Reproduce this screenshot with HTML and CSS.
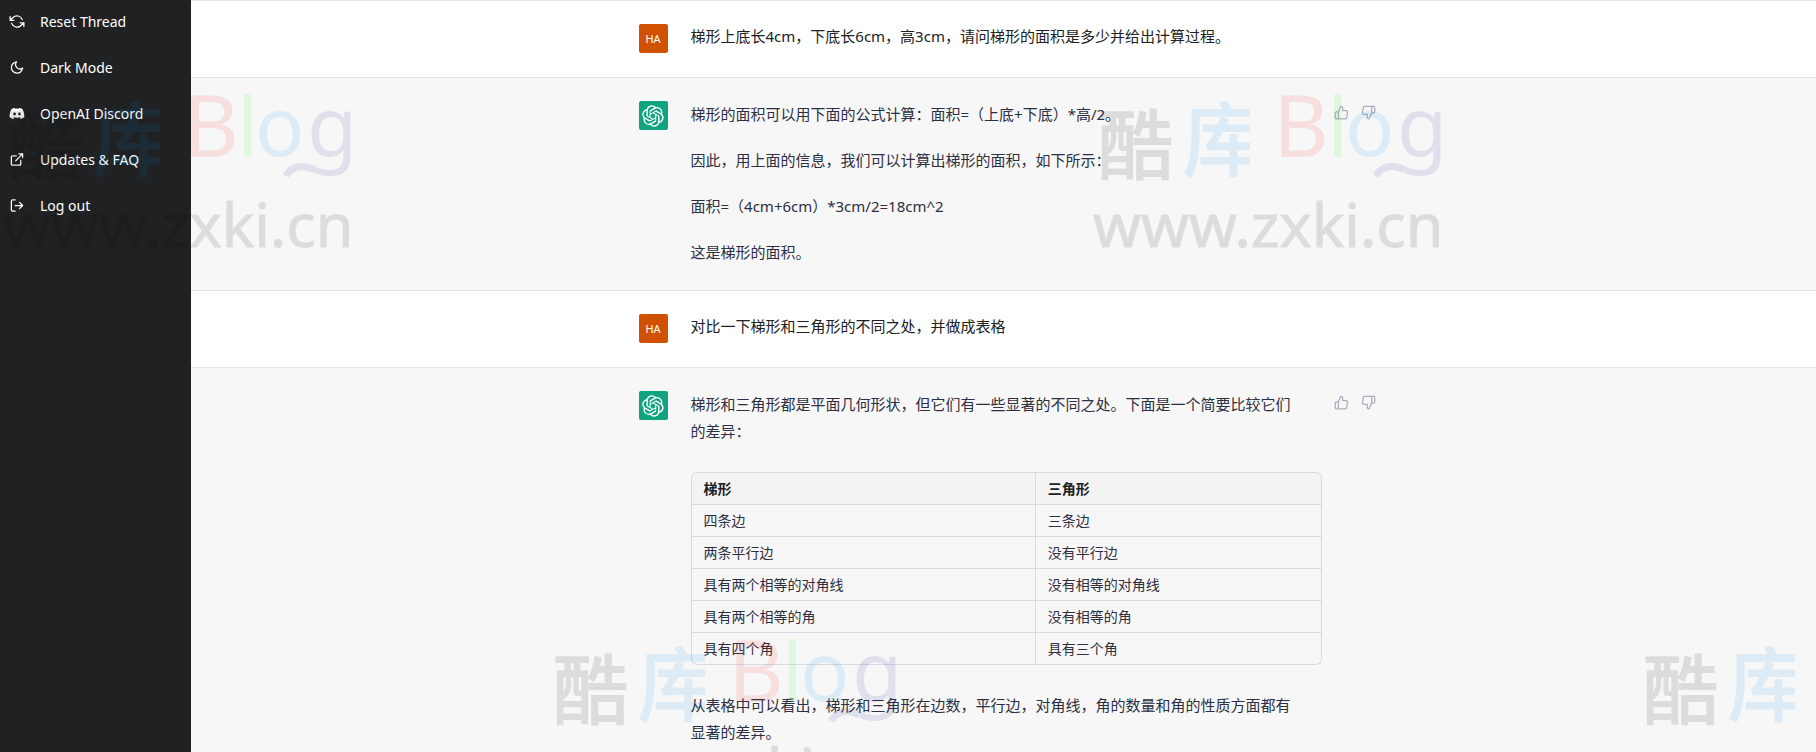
FILE: index.html
```html
<!DOCTYPE html>
<html lang="zh-CN">
<head>
  <meta charset="UTF-8" />
  <meta name="viewport" content="width=device-width, initial-scale=1.0" />
  <title>ChatGPT</title>
  <link rel="stylesheet" href="styles.css">
</head>
<body>
  <!-- Shared icons -->
  <svg class="defs" aria-hidden="true">
    <symbol id="logo" viewBox="0 0 41 41">
      <path fill="currentColor" d="M37.532 16.87a9.963 9.963 0 0 0-.856-8.184 10.078 10.078 0 0 0-10.855-4.835A9.964 9.964 0 0 0 18.306.5a10.079 10.079 0 0 0-9.614 6.977 9.967 9.967 0 0 0-6.664 4.834 10.08 10.08 0 0 0 1.24 11.817 9.965 9.965 0 0 0 .856 8.185 10.079 10.079 0 0 0 10.855 4.835 9.965 9.965 0 0 0 7.516 3.35 10.078 10.078 0 0 0 9.617-6.981 9.967 9.967 0 0 0 6.663-4.834 10.079 10.079 0 0 0-1.243-11.813zM22.498 37.886a7.474 7.474 0 0 1-4.799-1.735c.061-.033.168-.091.237-.134l7.964-4.6a1.294 1.294 0 0 0 .655-1.134V19.054l3.366 1.944a.12.12 0 0 1 .066.092v9.299a7.505 7.505 0 0 1-7.49 7.496zM6.392 31.006a7.471 7.471 0 0 1-.894-5.023c.06.036.162.099.237.141l7.964 4.6a1.297 1.297 0 0 0 1.308 0l9.724-5.614v3.888a.12.12 0 0 1-.048.103l-8.051 4.649a7.504 7.504 0 0 1-10.24-2.744zM4.297 13.62A7.469 7.469 0 0 1 8.2 10.333c0 .068-.004.19-.004.274v9.201a1.294 1.294 0 0 0 .654 1.132l9.723 5.614-3.366 1.944a.12.12 0 0 1-.114.01L7.04 23.856a7.504 7.504 0 0 1-2.743-10.237zm27.658 6.437l-9.724-5.615 3.367-1.943a.121.121 0 0 1 .113-.01l8.052 4.648a7.498 7.498 0 0 1-1.158 13.528v-9.476a1.293 1.293 0 0 0-.65-1.132zm3.35-5.043c-.059-.037-.162-.099-.236-.141l-7.965-4.6a1.298 1.298 0 0 0-1.308 0l-9.723 5.614v-3.888a.12.12 0 0 1 .048-.103l8.05-4.645a7.497 7.497 0 0 1 11.135 7.763zm-21.063 6.929l-3.367-1.944a.12.12 0 0 1-.065-.092v-9.299a7.497 7.497 0 0 1 12.293-5.756 6.94 6.94 0 0 0-.236.134l-7.965 4.6a1.294 1.294 0 0 0-.654 1.132l-.006 11.225zm1.829-3.943l4.33-2.501 4.332 2.5v5l-4.331 2.5-4.331-2.5V18z"/>
    </symbol>
    <symbol id="thumb-up" viewBox="0 0 24 24">
      <path d="M14 9V5a3 3 0 0 0-3-3l-4 9v11h11.28a2 2 0 0 0 2-1.7l1.38-9a2 2 0 0 0-2-2.3zM7 22H4a2 2 0 0 1-2-2v-7a2 2 0 0 1 2-2h3"/>
    </symbol>
    <symbol id="thumb-down" viewBox="0 0 24 24">
      <path d="M10 15v4a3 3 0 0 0 3 3l4-9V2H5.72a2 2 0 0 0-2 1.7l-1.38 9a2 2 0 0 0 2 2.3zm7-13h2.67A2.31 2.31 0 0 1 22 4v7a2.31 2.31 0 0 1-2.33 2H17"/>
    </symbol>
  </svg>

  <nav class="sidebar">
    <a href="#" class="nav-item">
      <svg class="icon" viewBox="0 0 24 24"><path d="M1 4v6h6M23 20v-6h-6M20.49 9A9 9 0 0 0 5.64 5.64L1 10m22 4l-4.64 4.36A9 9 0 0 1 3.51 15"/></svg>
      Reset Thread
    </a>
    <a href="#" class="nav-item">
      <svg class="icon" viewBox="0 0 24 24"><path d="M21 12.79A9 9 0 1 1 11.21 3 7 7 0 0 0 21 12.79z"/></svg>
      Dark Mode
    </a>
    <a href="#" class="nav-item">
      <svg class="icon icon-solid" viewBox="0 0 640 512"><path d="M524.531,69.836a1.5,1.5,0,0,0-.764-.7A485.065,485.065,0,0,0,404.081,32.03a1.816,1.816,0,0,0-1.923.91,337.461,337.461,0,0,0-14.9,30.6,447.848,447.848,0,0,0-134.426,0,309.541,309.541,0,0,0-15.135-30.6,1.89,1.89,0,0,0-1.924-.91A483.689,483.689,0,0,0,116.085,69.137a1.712,1.712,0,0,0-.788.676C39.068,183.651,18.186,294.69,28.43,404.354a2.016,2.016,0,0,0,.765,1.375A487.666,487.666,0,0,0,176.02,479.918a1.9,1.9,0,0,0,2.063-.676A348.2,348.2,0,0,0,208.12,430.4a1.86,1.86,0,0,0-1.019-2.588,321.173,321.173,0,0,1-45.868-21.853,1.885,1.885,0,0,1-.185-3.126c3.082-2.309,6.166-4.711,9.109-7.137a1.819,1.819,0,0,1,1.9-.256c96.229,43.917,200.41,43.917,295.5,0a1.812,1.812,0,0,1,1.924.233c2.944,2.426,6.027,4.851,9.132,7.16a1.884,1.884,0,0,1-.162,3.126,301.407,301.407,0,0,1-45.89,21.83,1.875,1.875,0,0,0-1,2.611,391.055,391.055,0,0,0,30.014,48.815,1.864,1.864,0,0,0,2.063.7A486.048,486.048,0,0,0,610.7,405.729a1.882,1.882,0,0,0,.765-1.352C623.729,277.594,590.933,167.465,524.531,69.836ZM222.491,337.58c-28.972,0-52.844-26.587-52.844-59.239S193.056,219.1,222.491,219.1c29.665,0,53.306,26.82,52.843,59.239C275.334,310.993,251.924,337.58,222.491,337.58Zm195.38,0c-28.971,0-52.843-26.587-52.843-59.239S388.437,219.1,417.871,219.1c29.667,0,53.307,26.82,52.844,59.239C470.715,310.993,447.538,337.58,417.871,337.58Z"/></svg>
      OpenAI Discord
    </a>
    <a href="#" class="nav-item">
      <svg class="icon" viewBox="0 0 24 24"><path d="M18 13v6a2 2 0 0 1-2 2H5a2 2 0 0 1-2-2V8a2 2 0 0 1 2-2h6M15 3h6v6M10 14L21 3"/></svg>
      Updates &amp; FAQ
    </a>
    <a href="#" class="nav-item">
      <svg class="icon" viewBox="0 0 24 24"><path d="M9 21H5a2 2 0 0 1-2-2V5a2 2 0 0 1 2-2h4M16 17l5-5-5-5M21 12H9"/></svg>
      Log out
    </a>
  </nav>

  <main class="chat">
    <section class="message user">
      <div class="inner">
        <div class="avatar">HA</div>
        <div class="text">
          <p>梯形上底长4cm，下底长6cm，高3cm，请问梯形的面积是多少并给出计算过程。</p>
        </div>
      </div>
    </section>

    <section class="message bot">
      <div class="inner">
        <div class="avatar"><svg class="logo"><use href="#logo"/></svg></div>
        <div class="text">
          <p>梯形的面积可以用下面的公式计算：面积=（上底+下底）*高/2。</p>
          <p>因此，用上面的信息，我们可以计算出梯形的面积，如下所示：</p>
          <p>面积=（4cm+6cm）*3cm/2=18cm^2</p>
          <p>这是梯形的面积。</p>
        </div>
        <div class="feedback">
          <button type="button" aria-label="Like"><svg class="icon"><use href="#thumb-up"/></svg></button>
          <button type="button" aria-label="Dislike"><svg class="icon"><use href="#thumb-down"/></svg></button>
        </div>
      </div>
    </section>

    <section class="message user">
      <div class="inner">
        <div class="avatar">HA</div>
        <div class="text">
          <p>对比一下梯形和三角形的不同之处，并做成表格</p>
        </div>
      </div>
    </section>

    <section class="message bot">
      <div class="inner">
        <div class="avatar"><svg class="logo"><use href="#logo"/></svg></div>
        <div class="text">
          <p>梯形和三角形都是平面几何形状，但它们有一些显著的不同之处。下面是一个简要比较它们的差异：</p>
          <table>
            <thead>
              <tr><th>梯形</th><th>三角形</th></tr>
            </thead>
            <tbody>
              <tr><td>四条边</td><td>三条边</td></tr>
              <tr><td>两条平行边</td><td>没有平行边</td></tr>
              <tr><td>具有两个相等的对角线</td><td>没有相等的对角线</td></tr>
              <tr><td>具有两个相等的角</td><td>没有相等的角</td></tr>
              <tr><td>具有四个角</td><td>具有三个角</td></tr>
            </tbody>
          </table>
          <p>从表格中可以看出，梯形和三角形在边数，平行边，对角线，角的数量和角的性质方面都有显著的差异。</p>
        </div>
        <div class="feedback">
          <button type="button" aria-label="Like"><svg class="icon"><use href="#thumb-up"/></svg></button>
          <button type="button" aria-label="Dislike"><svg class="icon"><use href="#thumb-down"/></svg></button>
        </div>
      </div>
    </section>
  </main>

  <!-- Watermark, repeated in staggered rows -->
  <svg class="watermark" aria-hidden="true">
    <defs>
      <clipPath id="ku-clip"><rect x="90" y="0" width="70" height="100"/></clipPath>
      <g id="mark">
        <text class="mark-cjk mark-grey" x="8" y="83">酷</text>
        <text class="mark-ku mark-blue" x="93" y="79" clip-path="url(#ku-clip)">库</text>
        <text class="mark-b mark-red" x="183" y="67">B</text>
        <text class="mark-latin mark-green" x="237" y="67">l</text>
        <text class="mark-latin mark-blue" x="255" y="66">o</text>
        <g class="mark-g">
          <text class="mark-latin" x="307" y="66">g</text>
          <path class="mark-tail" d="M286 86C291 76 302 74 315 80"/>
        </g>
        <text class="mark-url mark-grey" x="3" y="157">www.zxki.cn</text>
      </g>
    </defs>
    <use href="#mark" x="0" y="90"/>
    <use href="#mark" x="1090" y="90"/>
    <use href="#mark" x="545" y="635"/>
    <use href="#mark" x="1635" y="635"/>
  </svg>
</body>
</html>
```
FILE: styles.css
```css
* {
  box-sizing: border-box;
}

body {
  margin: 0;
  display: flex;
  height: 100vh;
  overflow: hidden;
  position: relative;
  background-color: #fff;
  font-family: "Noto Sans", "Noto Sans CJK SC", sans-serif;
}

.defs {
  display: none;
}

.icon {
  width: 15px;
  height: 15px;
  flex: none;
  fill: none;
  stroke: currentColor;
  stroke-width: 2;
  stroke-linecap: round;
  stroke-linejoin: round;
}

.icon-solid {
  fill: currentColor;
  stroke: none;
}

/* Sidebar */
.sidebar {
  width: 191px;
  flex: none;
  background-color: #202123;
}

.nav-item {
  display: flex;
  align-items: center;
  gap: 15px;
  height: 46px;
  padding: 0 10px 3px 9px;
  color: #fff;
  font-size: 14px;
  text-decoration: none;
}

.nav-item .icon {
  width: 16px;
}

/* Conversation */
.chat {
  flex: 1;
  min-width: 0;
  overflow: hidden;
}

.message {
  border-top: 1px solid #e3e3e5;
  padding: 23px 24px 24px;
}

.message.bot {
  background-color: #f7f7f8;
}

.inner {
  display: flex;
  align-items: flex-start;
  max-width: 730px;
  margin: 0 auto;
}

.avatar {
  display: flex;
  align-items: center;
  justify-content: center;
  width: 29px;
  height: 29px;
  flex: none;
  margin-right: 23px;
  border-radius: 2px;
  background-color: #d05200;
  color: #fff;
  font-size: 11px;
}

.bot .avatar {
  background-color: #10a37f;
}

.logo {
  width: 22px;
  height: 22px;
}

.text {
  width: 631px;
  color: #2d2f42;
  font-size: 15px;
  line-height: 27px;
}

.user .text {
  color: #202123;
  line-height: 24px;
}

.text p {
  max-width: 40em;
  margin: 0;
}

.text p + p {
  margin-top: 19px;
}

.feedback {
  display: flex;
  gap: 12px;
  padding: 4px 0 0 12px;
  margin-right: -8px;
}

.feedback button {
  display: flex;
  padding: 0;
  border: none;
  background: none;
  color: #acacbe;
  cursor: pointer;
}

/* Comparison table */
table {
  width: 100%;
  margin: 27px 0;
  border: 1px solid #d9d9e3;
  border-width: 1px 0 0 1px;
  border-radius: 6px;
  border-collapse: separate;
  border-spacing: 0;
  font-size: 14px;
  line-height: 23px;
}

th,
td {
  padding: 4px 12px;
  border: 1px solid #d9d9e3;
  border-width: 0 1px 1px 0;
  text-align: left;
}

th {
  background-color: #f3f3f4;
  color: #202123;
}

th:first-child {
  border-top-left-radius: 6px;
}

th:last-child {
  border-top-right-radius: 6px;
}

tbody tr:last-child td:first-child {
  border-bottom-left-radius: 6px;
}

tbody tr:last-child td:last-child {
  border-bottom-right-radius: 6px;
}

/* Watermark */
.watermark {
  position: absolute;
  top: 0;
  left: 0;
  width: 100%;
  height: 100%;
  pointer-events: none;
}

.mark-cjk {
  font-size: 75px;
  stroke-width: 2;
}

.mark-ku {
  font-size: 80px;
  stroke-width: 2;
  stroke-linejoin: round;
}

.mark-b {
  font-size: 86px;
}

.mark-latin {
  font-size: 82px;
}

.mark-url {
  font-size: 61px;
  stroke-width: 1;
}

.mark-grey {
  fill: #000;
  stroke: #000;
  opacity: 0.1;
}

.mark-blue {
  fill: #008cdc;
  opacity: 0.1;
}

.mark-ku.mark-blue {
  stroke: #008cdc;
}

.mark-red {
  fill: #f0140a;
  opacity: 0.1;
}

.mark-green {
  fill: #14f014;
  opacity: 0.1;
}

.mark-g {
  fill: #1e148c;
  opacity: 0.1;
}

.mark-tail {
  fill: none;
  stroke: #1e148c;
  stroke-width: 7;
}
```
